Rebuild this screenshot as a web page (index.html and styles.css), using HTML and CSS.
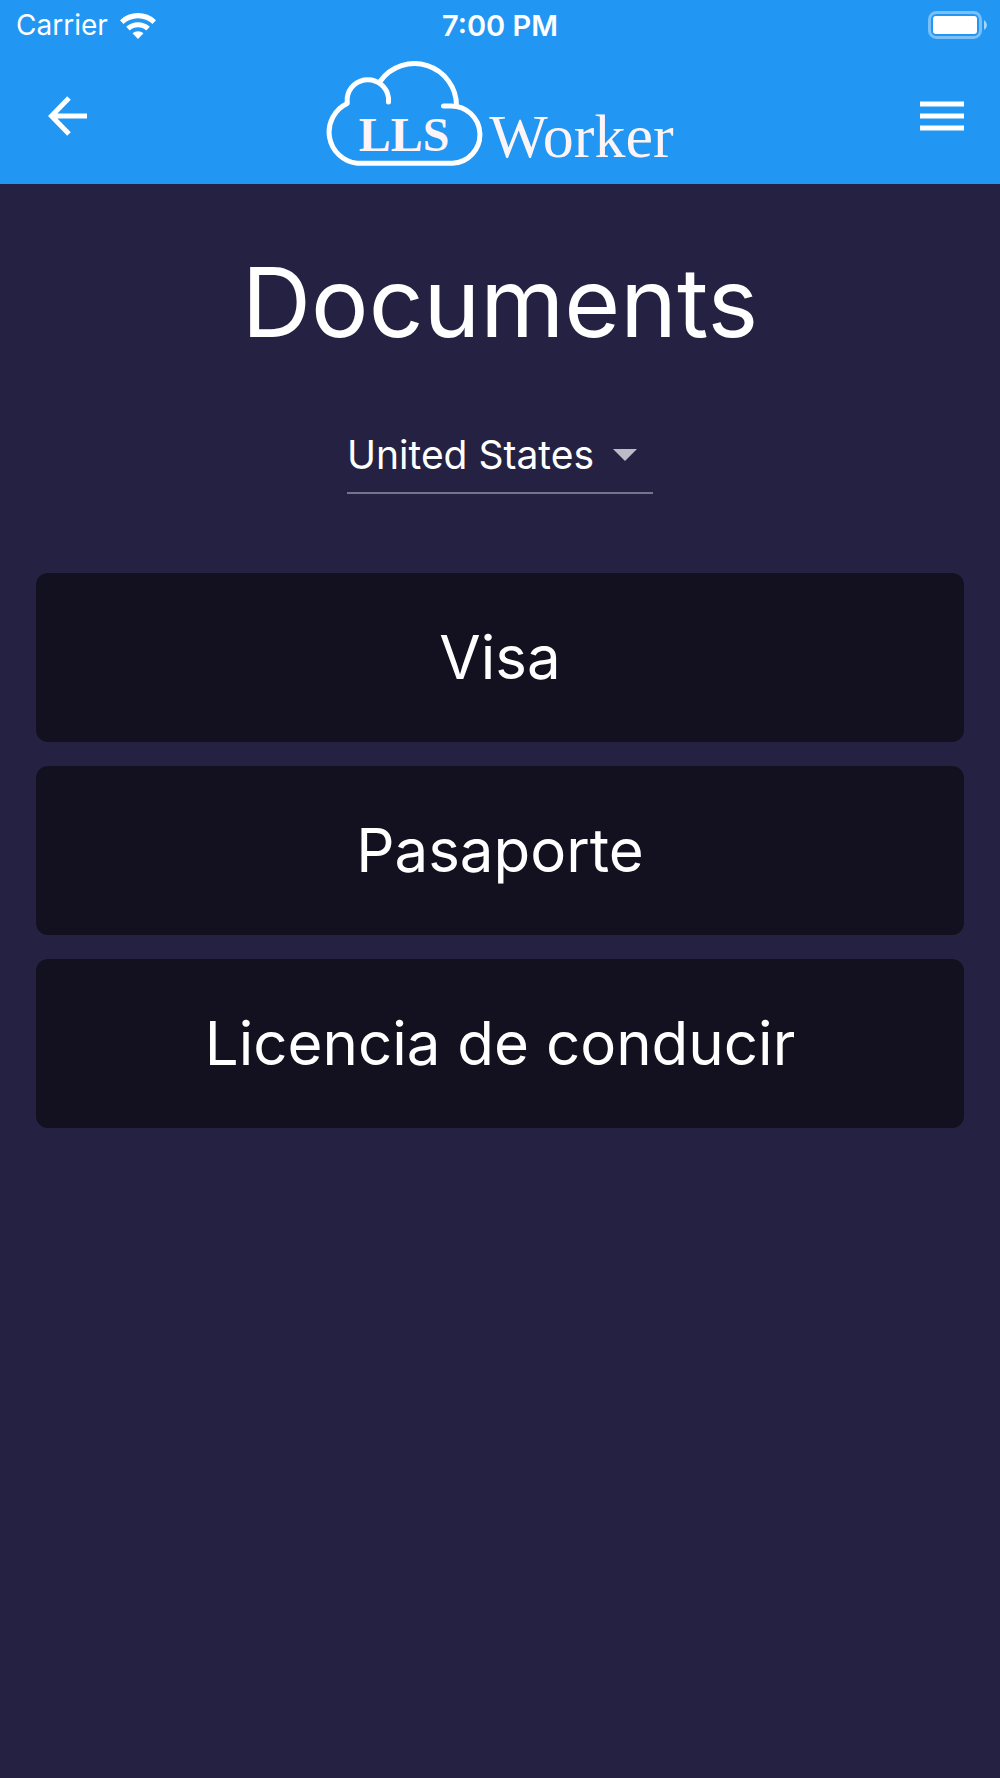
FILE: index.html
```html
<!DOCTYPE html>
<html lang="en">
<head>
    <meta charset="UTF-8" />
    <meta name="viewport" content="width=device-width, initial-scale=1.0" />
    <title>Documents - LLS Worker</title>
    <link rel="stylesheet" href="styles.css">
</head>
<body>
    <header class="header">
        <div class="status-bar">
            <div class="carrier">
                <span>Carrier</span>
                <svg class="wifi" viewBox="0 0 36 27" width="36" height="27" aria-hidden="true">
                    <path d="M0 8.200A26 26 0 0 1 36 8.200L32.500 12A21 21 0 0 0 3.500 12Z" />
                    <path d="M6.200 14.800A17.500 17.500 0 0 1 29.800 14.800L26.300 18.500A12.500 12.500 0 0 0 9.700 18.500Z" />
                    <path d="M12.500 21.300A8.500 8.500 0 0 1 23.500 21.300L18 27Z" />
                </svg>
            </div>
            <span class="time">7:00 PM</span>
            <svg class="battery" viewBox="0 0 60 28" width="60" height="28" aria-hidden="true">
                <rect class="battery-case" x="1.500" y="1.500" width="51" height="25" rx="7" />
                <rect x="5" y="5" width="44" height="18" rx="3" />
                <path class="battery-tip" d="M56 9Q59 11 59 14T56 19Z" />
            </svg>
        </div>

        <nav class="nav-bar">
            <button class="icon-button" type="button" aria-label="Back">
                <svg viewBox="0 0 40 40" width="40" height="40">
                    <path class="arrow" d="M39 20H5M21 2L3.500 20L21 38" />
                </svg>
            </button>
            <div class="logo">
                <svg class="cloud" viewBox="0 0 157 106" width="157" height="106">
                    <path d="M62.500 41V37A20.800 20.800 0 0 0 21.200 37V42.500A31.500 31.500 0 0 0 31 102.300H126.500A28.500 28.500 0 0 0 124 45H117.500" />
                    <path d="M54.500 20A42 42 0 0 1 130.500 44.500" />
                    <text x="78" y="90" text-anchor="middle">LLS</text>
                </svg>
                <span class="logo-text">Worker</span>
            </div>
            <button class="icon-button" type="button" aria-label="Menu">
                <svg viewBox="0 0 44 30" width="44" height="30">
                    <path d="M0 0.500H44V5.500H0ZM0 12.500H44V17.500H0ZM0 24.500H44V29.500H0Z" />
                </svg>
            </button>
        </nav>
    </header>

    <main class="content">
        <h1>Documents</h1>

        <div class="country">
            <select id="country" aria-label="Country">
                <option selected>United States</option>
            </select>
            <svg class="caret" viewBox="0 0 24 12" width="24" height="12" aria-hidden="true">
                <path d="M0 0H24L12 12Z" />
            </svg>
        </div>

        <div class="documents">
            <button class="document" type="button">Visa</button>
            <button class="document" type="button">Pasaporte</button>
            <button class="document" type="button">Licencia de conducir</button>
        </div>
    </main>
</body>
</html>
```
FILE: styles.css
```css
* {
    box-sizing: border-box;
}

body {
    margin: 0;
    min-height: 100vh;
    font-family: Inter, 'Liberation Sans', sans-serif;
    background-color: #252142;
    color: #fff;
}

button, select {
    font-family: inherit;
    color: inherit;
    border: none;
    cursor: pointer;
}

svg {
    display: block;
    fill: #fff;
}

/* Header */
.header {
    background-color: #2196f3;
}

.status-bar {
    display: grid;
    grid-template-columns: 1fr auto 1fr;
    align-items: center;
    height: 50px;
    padding: 0 12px;
    font-size: 28px;
}

.carrier {
    display: flex;
    align-items: center;
    gap: 12px;
    padding-left: 4px;
}

.time {
    font-size: 29px;
    font-weight: 600;
}

.battery {
    justify-self: end;
}

.battery-case {
    fill: none;
    stroke: #fff;
    stroke-width: 3;
    opacity: 0.4;
}

.battery-tip {
    opacity: 0.6;
}

.nav-bar {
    display: flex;
    align-items: center;
    justify-content: space-between;
    height: 134px;
    padding: 0 36px 2px;
}

.icon-button {
    display: flex;
    align-items: center;
    justify-content: center;
    width: 64px;
    height: 64px;
    padding: 0;
    background: none;
}

.icon-button:last-child {
    justify-content: flex-end;
}

.arrow {
    fill: none;
    stroke: #fff;
    stroke-width: 5;
}

.logo {
    display: flex;
    align-items: center;
    gap: 6px;
    padding-bottom: 4px;
}

.cloud {
    fill: none;
    stroke: #fff;
    stroke-width: 5;
    stroke-linecap: round;
    stroke-linejoin: round;
}

.cloud text {
    fill: #fdf4f7;
    stroke: none;
    font: bold 48px 'Liberation Serif', serif;
}

.logo-text {
    padding-top: 44px;
    font: 62px/66px 'Liberation Serif', serif;
    color: #fdf4f7;
}

/* Documents page */
.content {
    display: flex;
    flex-direction: column;
    align-items: center;
    padding: 58px 36px;
}

h1 {
    margin: 0;
    font-size: 96px;
    font-weight: 400;
    line-height: 120px;
}

.country {
    display: grid;
    align-items: center;
    width: 306px;
    height: 70px;
    margin: 62px 0 79px;
    border-bottom: 2px solid #76738a;
}

.country select, .caret {
    grid-area: 1 / 1;
}

.country select {
    width: 100%;
    padding: 0 44px 6px 0;
    font-size: 39px;
    line-height: 48px;
    background: none;
    appearance: none;
}

.country option {
    background-color: #252142;
}

.caret {
    justify-self: end;
    margin: 0 16px 6px 0;
    fill: #bdbbc7;
    pointer-events: none;
}

.documents {
    display: flex;
    flex-direction: column;
    gap: 24px;
    width: 100%;
}

.document {
    padding: 48px 24px 49px;
    font-size: 60px;
    line-height: 72px;
    background-color: #13101f;
    border-radius: 12px;
}
```
